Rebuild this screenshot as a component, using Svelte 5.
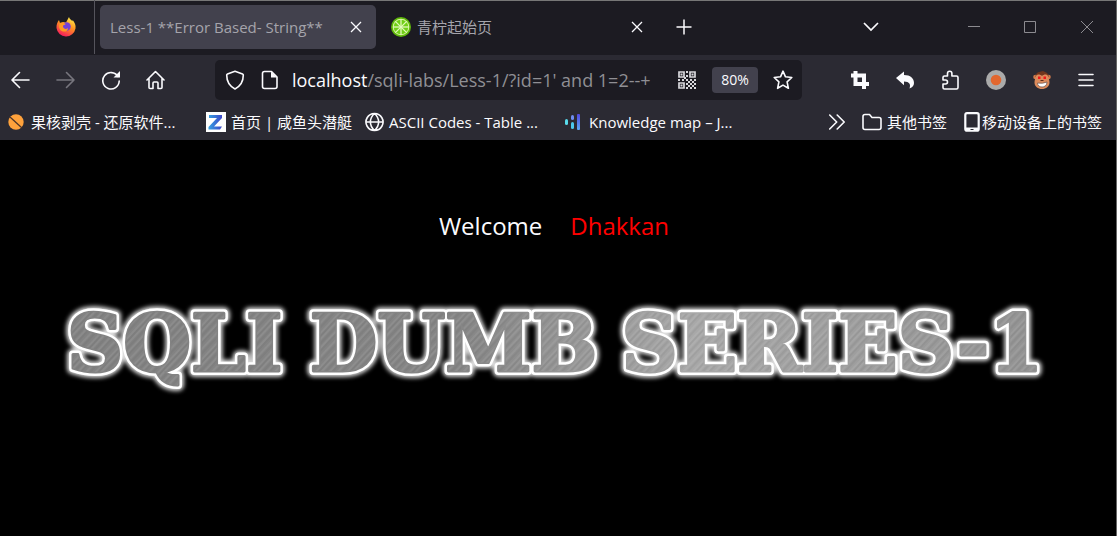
<script>
  const finders = [[1, 1], [12, 1], [1, 12]];
  const modules = [[9, 1], [9, 5], [1, 9], [5, 9], [7, 7], [9, 9], [13, 9], [17, 9], [11, 11], [15, 11], [9, 13], [13, 13], [17, 13], [11, 15], [15, 15], [9, 17], [13, 17], [17, 17]];
  const words = [
    { text: 'SQLI', x: 67 },
    { text: 'DUMB', x: 310 },
    { text: 'SERIES-1', x: 622 }
  ];
  const spokes = [0, 45, 90, 135];
</script>

{#snippet cross()}
  <svg width="12" height="12" viewBox="0 0 12 12"><path d="M1 1l10 10M11 1L1 11" stroke="currentColor" stroke-width="1.3" /></svg>
{/snippet}

<div class="window">
  <header class="tabs">
    <div class="pinned">
      <svg width="20" height="20" viewBox="0 0 20 20" role="img" aria-label="Firefox">
        <defs>
          <linearGradient id="fox" x1=".8" y1="0" x2=".3" y2="1"><stop offset="0" stop-color="#fff44f" /><stop offset=".45" stop-color="#ff9320" /><stop offset="1" stop-color="#f5155f" /></linearGradient>
        </defs>
        <path d="M3 3l1 3 3-1 3 .5L13 0c.3 2 2 2.500 3.300 4.200l.4-1.200c2 2.500 3.300 5 2.800 8.500A9.600 9.600 0 0 1 .5 11C.3 7.500 1.500 5 3 3z" fill="url(#fox)" />
        <circle cx="10.500" cy="9.500" r="4.300" fill="#7442d8" />
        <path d="M4 6c2-.8 3.500.2 5 .5 1 .2.500 1.500-1 1.600-1 .4-1 1-1 2 1 2 3 2.500 5 .8 0 4-5.500 5-8 1.500C2.500 10 3 8 4 6z" fill="#ff9a23" />
      </svg>
    </div>
    <div class="tab active">
      <span>Less-1 **Error Based- String**</span>
      <button aria-label="Close tab">{@render cross()}</button>
    </div>
    <div class="tab">
      <svg width="20" height="20" viewBox="-10 -10 20 20" aria-hidden="true">
        <circle r="10" fill="#5fb80b" /><circle r="8.300" fill="#d8f5a0" /><circle r="7.300" fill="#70cf16" />
        {#each spokes as a}<path d="M-8 0H8" stroke="#e2f8bb" stroke-width="1.300" transform="rotate({a})" />{/each}
      </svg>
      <span>青柠起始页</span>
      <button aria-label="Close tab">{@render cross()}</button>
    </div>
    <button class="new" aria-label="New tab"><svg width="16" height="16" viewBox="0 0 16 16"><path d="M8 .5v15M.5 8h15" stroke="currentColor" stroke-width="1.500" /></svg></button>
    <div class="controls">
      <button aria-label="List all tabs"><svg width="16" height="10" viewBox="0 0 16 10"><path d="M1 1l7 7 7-7" fill="none" stroke="currentColor" stroke-width="1.700" /></svg></button>
      <button class="dim" aria-label="Minimize"><svg width="12" height="12" viewBox="0 0 12 12"><path d="M0 5.500h12" stroke="currentColor" /></svg></button>
      <button class="dim" aria-label="Maximize"><svg width="12" height="12" viewBox="0 0 12 12"><path d="M.5.5h11v11H.5z" fill="none" stroke="currentColor" /></svg></button>
      <button class="dim" aria-label="Close"><svg width="14" height="14" viewBox="0 0 14 14"><path d="M1 1l12 12M13 1L1 13" stroke="currentColor" /></svg></button>
    </div>
  </header>

  <nav class="toolbar" aria-label="Navigation">
    <div class="group">
      <button aria-label="Back"><svg width="20" height="20" viewBox="0 0 20 20"><path d="M18 10H1.500M8.500 2.500L1 10l7.500 7.500" class="line" /></svg></button>
      <button class="off" aria-label="Forward"><svg width="20" height="20" viewBox="0 0 20 20"><path d="M1 10h17M10.500 2.500L18 10l-7.500 7.500" class="line" /></svg></button>
      <button aria-label="Reload"><svg width="20" height="20" viewBox="0 0 20 20"><path d="M17 6.500A8.200 8.200 0 1 0 18.200 11" class="line" /><path d="M19 1v6.500h-6.500z" fill="currentColor" /></svg></button>
      <button aria-label="Home"><svg width="20" height="20" viewBox="0 0 20 20"><path d="M1 10L9.500 1.500 18 10M3 8.500v9q0 1 1 1h3V13q0-1 1-1h3q1 0 1 1v5.500h3q1 0 1-1v-9" class="line" /></svg></button>
    </div>
    <div class="address">
      <button aria-label="Tracking protection"><svg width="20" height="20" viewBox="0 0 20 20"><path d="M10 1.200l7.500 2.700q.8.300.8 1.200C18.300 12 15 16.500 10 19 5 16.500 1.700 12 1.700 5.100q0-.9.8-1.200z" class="line" /></svg></button>
      <button aria-label="Site information"><svg width="20" height="20" viewBox="0 0 20 20"><path d="M4.500 1.500h7L17 7v9.500q0 2-2 2H4.500q-2 0-2-2v-13q0-2 2-2z" class="line" /><path d="M11 1.500L17 7.500h-6z" fill="currentColor" /></svg></button>
      <span class="url"><b>localhost</b>/sqli-labs/Less-1/?id=1' and 1=2--+</span>
      <button aria-label="QR code">
        <svg width="20" height="20" viewBox="0 0 20 20" fill="#d8d8dc">
          {#each finders as [x, y]}<path d="M{x + 1} {y + 1}h5v5h-5z" fill="none" stroke="#d8d8dc" stroke-width="1.700" /><path d="M{x + 2.5} {y + 2.5}h2v2h-2z" />{/each}
          {#each modules as [x, y]}<rect {x} {y} width="2" height="2" />{/each}
        </svg>
      </button>
      <button class="zoom">80%</button>
      <button aria-label="Bookmark this page"><svg width="20" height="20" viewBox="0 0 20 20"><path d="M10 1.200l2.500 5.600 6.300.7-4.700 4.300 1.300 6.500L10 15.100l-5.400 3.200 1.300-6.500L1.200 7.500l6.300-.7z" class="line" /></svg></button>
    </div>
    <div class="extensions">
      <button aria-label="Capture"><svg width="18" height="18" viewBox="0 0 18 18"><path d="M4.500 0v13H18M0 4.500h13V18" fill="none" stroke="currentColor" stroke-width="4" /></svg></button>
      <button aria-label="Undo"><svg width="18" height="18" viewBox="0 0 18 18"><path d="M0 7l8-6.500V4c6.500 0 10 3.500 10 8 0 2.500-1.500 4.500-4.500 5.500 1.500-4 0-7-5.500-7v3.800z" fill="currentColor" /></svg></button>
      <button aria-label="Extensions"><svg width="18" height="20" viewBox="0 0 18 20"><path d="M2 10V7.500q0-1.500 1.500-1.500h3V3.500a2.200 2.200 0 0 1 4.400 0V6h4.600Q17 6 17 7.500v10q0 1.500-1.500 1.500h-12Q2 19 2 17.500V14h2.500a2 2 0 0 0 0-4z" class="line" /></svg></button>
      <button aria-label="Recorder"><svg width="20" height="20" viewBox="0 0 20 20"><circle cx="10" cy="10" r="10" fill="#aaa" /><circle cx="10" cy="10" r="5.300" fill="#e2672f" /></svg></button>
      <button aria-label="Tampermonkey">
        <svg width="18" height="20" viewBox="0 0 18 20">
          <circle cx="2.500" cy="7" r="2.300" fill="#d07a4b" /><circle cx="15.500" cy="7" r="2.300" fill="#d07a4b" />
          <path d="M2.500 7C2.500 4 4 2.500 6 2l4-1 2 1c2.500.5 4 3 3.500 5z" fill="#70351d" />
          <path d="M3 6c1-2 4-2 6 0 2-2 5-2 6 0 .5 2 1.500 4 1.500 6.500 0 4-3.500 6.500-7.500 6.500s-7.500-2.500-7.500-6.500C1.500 10 2.500 8 3 6z" fill="#dc8b5c" />
          <path d="M5 6.500h2.500v2.500H5zM10.500 6.500H13v2.500h-2.500z" fill="#f01818" /><path d="M7.500 10.500h3" stroke="#5d2b19" />
          <path d="M4.500 13q5 1 9.500-1c0 3.500-2.500 5-5 5s-4.500-1.500-4.500-4z" fill="#fff" stroke="#66504a" stroke-width=".7" />
        </svg>
      </button>
      <button aria-label="Menu"><svg width="16" height="14" viewBox="0 0 16 14"><path d="M1 1.500h14M1 7h14M1 12.500h14" class="line" /></svg></button>
    </div>
  </nav>

  <nav class="bookmarks" aria-label="Bookmarks">
    <a class="first" href="#nut"><svg width="16" height="16" viewBox="0 0 16 16"><circle cx="8" cy="8" r="7.700" fill="#ffa23c" /><path d="M2 3l12 11" stroke="#4b3328" stroke-width="1.200" /></svg>果核剥壳 - 还原软件...</a>
    <a class="second" href="#submarine"><svg width="20" height="20" viewBox="0 0 20 20"><defs><linearGradient id="zed"><stop stop-color="#35a0e2" /><stop offset="1" stop-color="#3d47c8" /></linearGradient></defs><path d="M0 0h20v20H0z" fill="#fff" /><path d="M3 3h13v3L8 14.500h8l-2 3H2.500V15L11 6H3z" fill="url(#zed)" /></svg>首页 | 咸鱼头潜艇</a>
    <a class="third" href="#ascii"><svg width="19" height="20" viewBox="0 0 19 20"><path d="M9.500 1.500a8.500 8.500 0 1 0 .01 0zM1 10h17M9.500 1.500c-5.500 5-5.500 12 0 17 5.500-5 5.500-12 0-17z" class="line" /></svg>ASCII Codes - Table ...</a>
    <a class="fourth" href="#map"><svg width="16" height="18" viewBox="0 0 16 18"><defs><linearGradient id="bars" x2="0" y2="1"><stop stop-color="#5045e0" /><stop offset="1" stop-color="#5ca9f4" /></linearGradient></defs><rect y="6" width="3" height="6" rx="1.500" fill="#59dcec" /><rect x="6" y="2" width="3" height="5" rx="1.500" fill="#6e8df2" /><rect x="6" y="9" width="3" height="7" rx="1.500" fill="#4bc9ed" /><rect x="12" y="1" width="3" height="16" rx="1" fill="url(#bars)" /></svg>Knowledge map – J...</a>
    <div class="overflow">
      <button aria-label="More bookmarks"><svg width="16" height="16" viewBox="0 0 16 16"><path d="M.7 1l7 7-7 7M8.200 1l7 7-7 7" class="line" /></svg></button>
      <a href="#other"><svg width="20" height="18" viewBox="0 0 20 18"><path d="M3 1.500h4.500l2.500 3h7q2 0 2 2v8q0 2-2 2H3q-2 0-2-2v-11q0-2 2-2z" class="line" /></svg>其他书签</a>
      <a class="mobile" href="#mobile"><svg width="16" height="20" viewBox="0 0 16 20"><path d="M3 1.200h10q1.700 0 1.700 1.700v14q0 1.700-1.700 1.700H3q-1.700 0-1.700-1.700v-14Q1.300 1.200 3 1.200z" fill="none" stroke="currentColor" stroke-width="2.200" /><path d="M1 15.500h14V19H1z" fill="currentColor" /><path d="M6.500 17.500h3" stroke="#2b2a33" /></svg>移动设备上的书签</a>
    </div>
  </nav>

  <main>
    <p><span>Welcome</span><span class="name">Dhakkan</span></p>
    <h1 aria-label="SQLI DUMB SERIES-1">
      <svg viewBox="0 0 1117 110">
        <defs>
          <linearGradient id="shade" gradientUnits="userSpaceOnUse" x1="60" y1="0" x2="1050" y2="0"><stop stop-color="#828282" /><stop offset=".4" stop-color="#858585" /><stop offset=".64" stop-color="#a8a8a8" /><stop offset="1" stop-color="#929292" /></linearGradient>
          <pattern id="brushed" width="23" height="97" patternUnits="userSpaceOnUse" patternTransform="rotate(43)">
            <path d="M2 0v97M9 0v97M13 0v97M19 0v97" stroke="#fff" stroke-opacity=".2" stroke-width=".7" /><path d="M5 0v97M11 0v97M16 0v97M21 0v97" stroke="#333" stroke-opacity=".18" stroke-width=".7" />
          </pattern>
          <filter id="halo" x="-5%" y="-30%" width="110%" height="160%"><feGaussianBlur stdDeviation="2" /></filter>
        </defs>
        {#each ['halo', 'rim', 'face', 'grain'] as layer}
          <g class={layer} aria-hidden={layer !== 'face'}>
            {#each words as word}<text x={word.x} y="78">{word.text}</text>{/each}
          </g>
        {/each}
      </svg>
    </h1>
  </main>
</div>

<style>
  :global(body) { margin: 0; background: #000; }
  .window { min-height: 100vh; box-sizing: border-box; border-top: 1px solid #777; border-right: 1px solid #666; background: #000; color: #fbfbfe; font: 15px/20px "Open Sans", "Noto Sans CJK SC", sans-serif; }
  button { display: flex; align-items: center; justify-content: center; padding: 0; border: 0; background: none; color: inherit; font: inherit; }
  svg { display: block; flex: none; }
  a { color: inherit; text-decoration: none; display: flex; align-items: center; white-space: nowrap; }
  .line { fill: none; stroke: currentColor; stroke-width: 1.6px; stroke-linejoin: round; stroke-linecap: round; }
  .tabs { display: flex; align-items: center; height: 54px; box-sizing: border-box; padding-bottom: 2px; background: #1c1b22; }
  .pinned { width: 95px; height: 54px; box-sizing: border-box; padding-left: 56px; display: flex; align-items: center; border-right: 1px solid #55545c; }
  .tab { width: 276px; height: 44px; box-sizing: border-box; margin-left: 5px; padding: 0 14px 0 10px; display: flex; align-items: center; gap: 6px; border-radius: 5px; color: #a5a4ab; white-space: nowrap; }
  .tab button { margin-left: auto; color: #fbfbfe; }
  .active { background: #42414d; }
  .new { margin-left: 19px; width: 16px; }
  .controls { margin-left: auto; display: flex; align-items: center; gap: 44px; padding-right: 22px; }
  .controls button:first-child { margin-right: 45px; }
  .dim { color: #8c8b90; }
  .toolbar { display: flex; align-items: center; height: 50px; background: #2b2a33; }
  .group { display: flex; gap: 25px; padding-left: 11px; width: 204px; box-sizing: content-box; }
  .off { color: #77767e; }
  .address { flex: 1; min-width: 0; height: 40px; display: flex; align-items: center; gap: 15px; padding: 0 9px 0 10px; background: #1c1b22; border-radius: 5px; }
  .url { flex: 1; min-width: 0; overflow: hidden; margin-right: -4px; margin-left: -3px; font-size: 18px; line-height: 28px; white-space: nowrap; color: #8f8f94; }
  .url b { font-weight: 400; color: #fbfbfe; }
  .zoom { width: 46px; height: 26px; border-radius: 4px; background: #42414d; font-size: 14px; }
  .extensions { display: flex; align-items: center; gap: 27px; padding: 0 22px 0 49px; }
  .bookmarks { display: flex; align-items: center; height: 35px; box-sizing: border-box; padding: 0 14px 2px 8px; background: #2b2a33; }
  .bookmarks a { gap: 5px; }
  .bookmarks .first { gap: 7px; width: 198px; }
  .bookmarks .second { width: 159px; }
  .bookmarks .third { width: 200px; }
  .bookmarks .fourth { gap: 8px; }
  .overflow { margin-left: auto; display: flex; align-items: center; gap: 17px; }
  .bookmarks .mobile { gap: 2px; }
  main { padding-top: 68px; }
  p { margin: 0; display: flex; justify-content: center; gap: 28px; font-size: 24px; line-height: 36px; padding-right: 8px; }
  .name { color: #f00; }
  h1 { margin: 49px 0 0; font-size: 78px; }
  h1 svg { width: 100%; }
  text { font: 700 78px "DejaVu Serif", serif; stroke-linejoin: round; }
  .halo { fill: #ddd; stroke: #ddd; stroke-width: 12px; filter: url(#halo); }
  .rim { fill: #fff; stroke: #fff; stroke-width: 8px; }
  .face { fill: url(#shade); stroke: url(#shade); stroke-width: 3px; }
  .grain { fill: url(#brushed); }
</style>
